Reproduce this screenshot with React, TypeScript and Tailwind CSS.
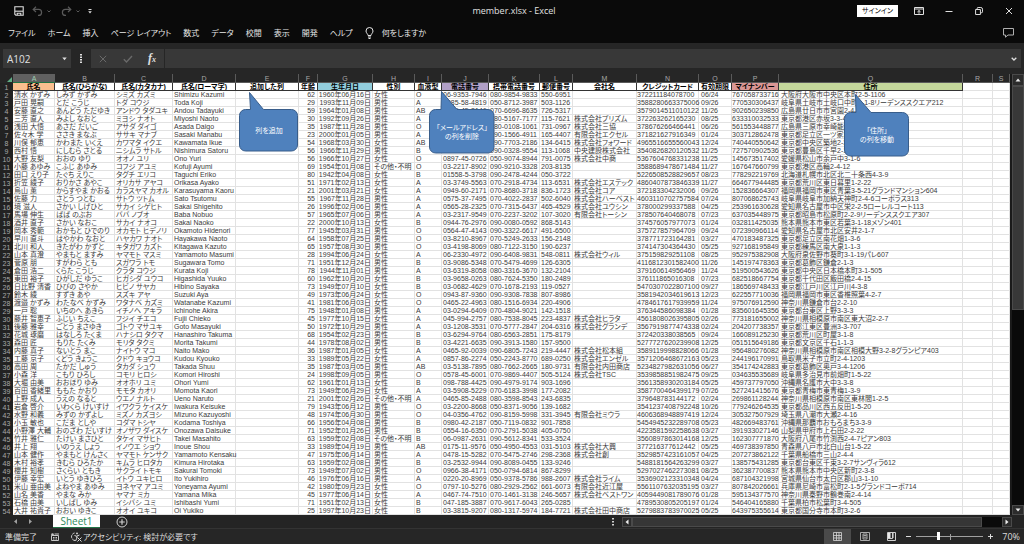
import { ReactNode } from "react";

const columns = [
  { id: "A", label: "氏名", col: "w-[42px]", head: "bg-[#fabf8f]", cell: "pl-px" },
  { id: "B", label: "氏名(ひらがな)", col: "w-[60px]", head: "bg-white", cell: "pl-px" },
  { id: "C", label: "氏名(カタカナ)", col: "w-[58px]", head: "bg-white", cell: "pl-px" },
  { id: "D", label: "氏名(ローマ字)", col: "w-[63px]", head: "bg-white", cell: "pl-px" },
  { id: "E", label: "追加した列", col: "w-[63px]", head: "bg-white", cell: "pl-px" },
  { id: "F", label: "年齢", col: "w-[19px]", head: "bg-white", cell: "pr-0.5 text-right" },
  { id: "G", label: "生年月日", col: "w-[55px]", head: "bg-[#92cddc]", cell: "pr-px text-right" },
  { id: "H", label: "性別", col: "w-[42px]", head: "bg-white", cell: "pl-px" },
  { id: "I", label: "血液型", col: "w-[27px]", head: "bg-white", cell: "pl-px" },
  { id: "J", label: "電話番号", col: "w-[47px]", head: "bg-[#b1a0c7]", cell: "pl-px" },
  { id: "K", label: "携帯電話番号", col: "w-[51px]", head: "bg-white", cell: "pl-px" },
  { id: "L", label: "郵便番号", col: "w-[33px]", head: "bg-white", cell: "pl-px" },
  { id: "M", label: "会社名", col: "w-[64px]", head: "bg-white", cell: "pl-px" },
  { id: "N", label: "クレジットカード", col: "w-[62px]", head: "bg-white", cell: "pl-0" },
  { id: "O", label: "有効期限", col: "w-[33px]", head: "bg-white", cell: "pl-0.5" },
  { id: "P", label: "マイナンバー", col: "w-[47px]", head: "bg-[#da9694]", cell: "text-right" },
  { id: "Q", label: "住所", col: "w-[184px]", head: "bg-[#c4d79b]", cell: "pl-0.5" },
  { id: "R", label: "", col: "w-[30px]", head: "bg-white", cell: "" },
  { id: "S", label: "", col: "w-auto", head: "bg-white", cell: "" },
];

// name | hiragana | katakana | romaji | age | birthday | sex | blood | tel | mobile | zip | company | card | expiry | my number | address
const members = `
清水 かずみ|しみず かずみ|シミズ カズミ|Shimizu Kazumi|62|1960年06月16日|女性|O|06-9353-7946|080-9854-9833|550-6951||372211184078700|06/24|767058733716|大阪府大阪市中央区本町2-5-1106
戸田 晃嗣|とだ こうじ|トダ コウジ|Toda Koji|29|1993年11月09日|男性|A|0585-58-4819|050-8712-3987|503-1126||3588280663375006|09/26|770530306437|岐阜県土岐市土岐口中町1-1-8リーデンススクエア212
安藤 直之|あんどう ただゆき|アンドウ タダユキ|Andou Tadayuki|59|1964年01月08日|男性|AB|0829-45-3146|070-6696-8635|726-5317||3579014511010122|11/26|902650239850|広島県廿日市市宮園2-4-17
三芳 直人|みよし なおと|ミヨシ ナオト|Miyoshi Naoto|30|1992年09月26日|男性|A|03-8210-4432|080-5167-7177|115-7621|株式会社プリズム|372263262165230|08/25|633310032533|東京都港区赤坂3-3-4
浅田 大悟|あさだ だいご|アサダ ダイゴ|Asada Daigo|35|1987年11月28日|男性|O|0848-20-1175|080-0108-1061|731-0967|株式会社三協|378676266466441|06/26|561553448877|広島県三原市幸崎能地1-2
佐々木 学|ささき まなぶ|ササキ マナブ|Sasaki Manabu|23|2000年01月05日|男性|A|03-5521-7730|090-1566-4911|165-4407|有限会社エクセル|371821627916349|01/24|303712862478|東京都足立区一ツ家2-4
川俣 郁恵|かわまた いくえ|カワマタ イクエ|Kawamata Ikue|54|1968年03月30日|女性|AB|03-1184-2096|090-7703-2186|134-6415|株式会社フォワード|4965516655560043|12/24|740440550642|東京都中央区築地2-3
西村 悟|にしむら さとる|ニシムラ サトル|Nishimura Satoru|56|1966年11月29日|男性|B|03-6604-3518|090-0328-9554|113-1068|中央建設株式会社|3540826820120532|11/25|727570902536|東京都豊島区千早2-1
大野 友梨|おおの ゆり|オオノ ユリ|Ono Yuri|56|1966年10月27日|女性|O|0897-45-0726|050-9074-8944|791-0075|株式会社中商|5367604768331238|11/25|145673517402|愛媛県松山市余戸中3-1-6
小藤 あゆみ|こふじ あゆみ|コフジ アユミ|Kofuji Ayumi|69|1954年01月08日|その他・不明|O|03-2217-8902|090-9210-3328|203-8135||3588689478671484|11/27|167647660799|東京都港区高輪2-4-12
田口 えり子|たぐち えりこ|タグチ エリコ|Taguchi Eriko|80|1942年04月08日|女性|B|01558-5-3798|090-2478-4244|050-3722||5226508528829657|08/23|778292219769|北海道札幌市北区北二十条西4-3-9
折笠 綾子|おりかさ あやこ|オリカサ アヤコ|Orikasa Ayako|51|1971年02月13日|女性|A|03-3749-5563|070-2918-4734|113-6531|株式会社エステック|4860407873846339|11/27|664677944485|東京都荒川区東日暮里1-2-22
烏山 薫|からすやま かおる|カラスヤマ カオル|Karasuyama Kaoru|21|2001年03月21日|女性|A|0949-60-2171|070-8680-3718|836-1723|株式会社コア|372183304232006|09/26|152836664307|福岡県福岡市東区青葉3-5-21グランドマンション604
佐藤 力|さとう つとむ|サトウ ツトム|Sato Tsutomu|55|1967年11月28日|男性|A|0575-37-7495|070-4022-2837|502-6040|株式会社ハーベスト|4603110702757584|07/24|807068625743|岐阜県岐阜市加納天神町2-4-6コーポラス313
境 滋人|さかい しげひと|サカイ シゲヒト|Sakai Shigehito|26|1996年02月06日|男性|A|0565-28-2325|070-7315-6437|465-4529|株式会社ユウシン|378000299337588|04/25|253961630628|愛知県名古屋市中区栄2-2-5ローレルコート113
馬場 伸生|ばば のぶお|ババ ノブオ|Baba Nobuo|57|1965年07月06日|男性|A|03-2317-9549|070-2237-3202|107-3020|有限会社トーシン|378507640468078|07/23|637035448975|東京都昭島市松原町2-2-9リーデンススクエア307
酒井 直子|さかい なおこ|サカイ ナオコ|Sakai Naoko|22|2000年10月13日|女性|B|0944-76-2976|090-0080-0592|868-5143||374576057977073|01/24|032811425035|熊本県熊本市東区若葉3-1-18メゾン401
岡本 秀範|おかもと ひでのり|オカモト ヒデノリ|Okamoto Hidenori|77|1945年03月31日|男性|O|0564-47-4143|090-3322-6617|491-6500||375727857964709|09/24|072390966114|愛知県名古屋市北区安井2-1-7
早川 直斗|はやかわ なおと|ハヤカワ ナオト|Hayakawa Naoto|64|1958年07月25日|男性|O|03-8210-8967|070-5249-2633|156-2148||378771723164281|03/27|470183487325|東京都足立区南花畑1-3-6
北川 和人|きたがわ かずと|キタガワ カズト|Kitagawa Kazuto|65|1957年08月30日|男性|O|03-4198-8069|080-7122-3150|190-6237||374147304364430|05/25|927168195849|東京都練馬区南大泉1-1-3
山本 真澄|やまもと ますみ|ヤマモト マスミ|Yamamoto Masumi|28|1994年06月24日|女性|A|06-2330-4972|090-6408-9831|548-0811|株式会社ウィル|375159829251108|08/25|952975382908|大阪府泉佐野市葵町3-1-19パレ607
菅原 朋|すがわら とも|スガワラ トモ|Sugawara Tomo|71|1951年12月24日|男性|B|03-9086-5348|070-5479-4699|126-6305||4116812301582400|11/26|145197478363|東京都葛飾区鎌倉2-1-3
倉田 浩二|くらた こうじ|クラタ コウジ|Kurata Koji|78|1944年11月01日|男性|A|03-6319-8058|080-3316-3670|132-2104||379160614956469|11/24|519500543626|東京都中央区日本橋本町3-1-505
東田 裕子|ひがしだ ゆうこ|ヒガシダ ユウコ|Higashida Yuuko|60|1962年10月20日|女性|B|03-9658-0263|080-7624-5350|180-2489||376111865016308|07/23|682518667754|東京都千代田区飯田橋2-4-15
日比野 清香|ひびの さやか|ヒビノ サヤカ|Hibino Sayaka|73|1949年07月10日|女性|B|03-0682-4629|070-1678-2193|119-0527||5470307022807100|09/27|186569748433|東京都江戸川区江戸川4-3-8
鈴木 綾|すずき あや|スズキ アヤ|Suzuki Aya|49|1973年06月24日|女性|O|0943-87-9360|090-9308-7838|807-8986||3581942034619613|12/23|622557710036|福岡県福岡市東区香椎照葉4-2-7
渡邉 かずみ|わたなべ かずみ|ワタナベ カズミ|Watanabe Kazumi|41|1981年06月03日|女性|O|0465-22-4963|080-1516-6934|220-4906||4784617617939959|11/24|975076912590|神奈川県鎌倉市台2-2-10
一戸 聡|いちのへ あきら|イチノヘ アキラ|Ichinohe Akira|75|1948年01月08日|男性|A|03-0294-6409|070-4804-9021|142-1518||376344586098384|01/28|835601645356|東京都台東区上野3-3-3
藤井 智恵子|ふじい ちえこ|フジイ チエコ|Fujii Chieko|45|1977年10月15日|女性|A|045-994-2757|080-7538-8045|223-4837|株式会社ヒラタ|4561808026395805|02/26|773181655002|神奈川県相模原市南区東大沼2-2-7
後藤 雅幸|ごとう まさゆき|ゴトウ マサユキ|Goto Masayuki|50|1972年10月29日|男性|A|03-1208-3531|070-5777-2847|204-6316|株式会社グランデ|3567919877474338|02/24|204207738357|東京都江東区豊洲3-3-707
花城 琢磨|はなしろ たくま|ハナシロ タクマ|Hanashiro Takuma|68|1954年02月23日|男性|B|03-6294-9764|080-6563-2851|175-8179||372420338038565|09/24|166089125230|東京都荒川区町屋3-1-8
森田 匠|もりた たくみ|モリタ タクミ|Morita Takumi|44|1978年08月02日|男性|B|03-4221-6635|090-3913-1580|157-9500||5277727620239908|12/25|051515649186|東京都文京区千石1-1-3
内藤 真子|ないとう まこ|ナイトウ マコ|Naito Mako|36|1987年01月05日|女性|A|0465-92-0039|090-6805-7243|219-4447|株式会社松本組|3589119998828066|01/28|956480276082|神奈川県相模原市南区相模大野3-2-8グランピア403
工藤 京子|くどう きょうこ|クドウ キョウコ|Kudou Kyouko|33|1989年05月22日|女性|A|0857-86-2274|050-2243-8770|689-0250|株式会社エンゼル|3571206468672163|05/23|244196170991|鳥取県米子市立町2-4-1203
高田 周|たかだ しゅう|タカダ シュウ|Takada Shuu|35|1987年03月05日|男性|AB|03-5138-7895|080-7662-2665|180-9731|有限会社内田商店|5234827982631056|06/27|354174242883|東京都葛飾区奥戸3-4-1206
小森 洋|こもり ひろし|コモリ ヒロシ|Komori Hiroshi|24|1998年09月05日|男性|O|0578-45-6001|070-9869-4407|505-5124|株式会社TSC|3539858851982475|09/25|034635535689|岐阜県多治見市前畑町1-5-22
大堀 由美|おおほり ゆみ|オオホリ ユミ|Ohori Yumi|62|1961年01月13日|女性|B|098-788-4425|090-4979-9174|903-1696||3561358930203184|05/25|459737797050|沖縄県名護市大中3-3-8
百田 香緒里|ももた かおり|モモタ カオリ|Momota Kaori|73|1949年06月29日|女性|A|03-5908-5229|070-6183-3998|177-2082||3587700464399179|07/26|527241415676|東京都青梅市東青梅1-3-9
上野 成人|うえの なると|ウエノ ナルト|Ueno Naruto|21|2001年02月26日|その他・不明|A|0465-85-2488|080-3598-8543|243-6835||379648783144172|02/24|269861128244|神奈川県相模原市南区東林間1-2-5
岩倉 啓介|いわくら けいすけ|イワクラ ケイスケ|Iwakura Keisuke|79|1943年06月12日|男性|O|03-2200-8668|050-8371-9056|139-1682||3541237408792248|10/26|779246264535|東京都品川区西五反田1-5-20
水野 和義|みずの かずよし|ミズノ カズヨシ|Mizuno Kazuyoshi|48|1974年06月30日|男性|O|04-0356-4762|090-8159-5998|331-3945|有限会社ミウラ|4606368948897419|12/24|305327507929|埼玉県八潮市大瀬2-4-16
小玉 敏也|こだま としや|コダマ トシヤ|Kodama Toshiya|66|1956年04月08日|男性|B|0980-42-2187|050-7119-0832|901-7858||5454945232289708|05/23|482669483761|沖縄県那覇市おもろまち3-3-9
小野澤 大輔|おのざわ だいすけ|オノザワ ダイスケ|Onozawa Daisuke|71|1952年01月26日|男性|B|0554-16-6350|070-2791-5038|405-0750||4223581592258638|03/27|391933027146|山梨県甲府市上石田2-2-22
竹井 雅仁|たけい まさひと|タケイ マサヒト|Takei Masahito|63|1959年02月08日|その他・不明|B|06-0987-2631|090-5612-8341|533-3524||3560897863014168|12/25|162307771870|大阪府八尾市竹渕西2-4-7ピアン803
井上 翔|いのうえ しょう|イノウエ ショウ|Inoue Shou|33|1989年04月19日|男性|AB|0175-11-9576|050-4950-4553|031-5103|株式会社大興|377216377612442|05/25|469738397850|青森県八戸市北白山台1-5-22
山本 健作|やまもと けんさく|ヤマモト ケンサク|Yamamoto Kensaku|47|1975年06月14日|男性|A|0478-15-5282|070-5475-2746|298-2368|株式会社創|3529857423161057|04/25|207273862122|千葉県船橋市三山2-4-4
木村 裕孝|きむら ひろたか|キムラ ヒロタカ|Kimura Hirotaka|63|1959年02月08日|男性|B|03-2532-9944|090-8089-0455|133-9246||5488181564263299|03/27|138575431285|東京都台東区千束3-2-7サンヴィラ612
櫻井 知樹|さくらい ともき|サクライ トモキ|Sakurai Tomoki|73|1949年07月02日|男性|O|0966-38-4171|050-0794-6814|867-8299||5297027462273081|08/25|362387700837|熊本県熊本市中央区新町2-3-8
伊藤 幸宏|いとう ゆきひろ|イトウ ユキヒロ|Ito Yukihiro|46|1976年06月16日|男性|A|0220-20-8969|050-9378-5786|988-2607|株式会社ライム|3536902123310348|04/24|687104321998|宮城県仙台市太白区郡山3-1-10
米山 亜由美|よねやま あゆみ|ヨネヤマ アユミ|Yoneyama Ayumi|42|1980年09月23日|女性|O|0797-10-5276|080-2929-2562|661-6073|有限会社近江屋|5561107632035195|03/27|807842026661|兵庫県尼崎市富松町2-1-5グランドコーポ714
山名 美香|やまな みか|ヤマナ ミカ|Yamana Mika|45|1977年06月14日|女性|A|0467-74-7510|070-1461-3138|246-5657|株式会社ベストワン|4059449081789076|01/28|595134377570|神奈川県秦野市鶴巻南2-4-14
石橋 由美|いしばし ゆみ|イシバシ ユミ|Ishibashi Yumi|71|1951年02月13日|女性|B|047-185-3887|070-9617-6043|265-0285||4789530805205197|01/24|546404165880|千葉県柏市松葉町3-4-505
大井 祐貴子|おおい ゆきこ|オオイ ユキコ|Oi Yukiko|25|1997年10月23日|女性|B|03-3815-9207|080-1317-5974|184-7721|株式会社田中商店|5279883783970025|05/25|643975355614|東京都国分寺市本町3-2-6
`
  .trim()
  .split("\n")
  .map((line) => {
    const v = line.split("|");
    // column E was added later and is still empty, R and S are outside the data
    return [...v.slice(0, 4), "", ...v.slice(4), "", ""];
  });

const menus = ["ファイル", "ホーム", "挿入", "ページ レイアウト", "数式", "データ", "校閲", "表示", "開発", "ヘルプ"];

const TitleBar = () => (
  <header className="flex h-[22px] items-center bg-[#0a0a0a] text-[#e0e0e0]">
    <div className="flex flex-1 items-center pl-3.5">
      <button aria-label="保存">
        <svg width="10" height="10" viewBox="0 0 10 10" fill="none" stroke="currentColor">
          <path d="M.8.8h8.4v8.4H1.8l-1-1z" strokeWidth="1.1" />
          <path d="M1 5.2h8" strokeWidth="1.1" />
          <path d="M3.2 9V7.2h3.6V9" strokeWidth="1.1" />
        </svg>
      </button>
      <button aria-label="元に戻す" className="ml-2 flex items-center gap-1 text-[#5a5a5a]">
        <svg width="11" height="10" viewBox="0 0 11 10" fill="none" stroke="currentColor" strokeWidth="1.2">
          <path d="M4 .8 1.2 3.4 4 6M1.4 3.4h5.2a3 3 0 0 1 0 6H6" />
        </svg>
        <svg width="4" height="3" viewBox="0 0 4 3" fill="none" stroke="currentColor">
          <path d="m.5.5 1.5 1.5L3.5.5" />
        </svg>
      </button>
      <button aria-label="やり直し" className="ml-2.5 flex items-center gap-1 text-[#5a5a5a]">
        <svg width="11" height="10" viewBox="0 0 11 10" fill="none" stroke="currentColor" strokeWidth="1.2">
          <path d="M7 .8l2.8 2.6L7 6M9.6 3.4H4.4a3 3 0 0 0 0 6H5" />
        </svg>
        <svg width="4" height="3" viewBox="0 0 4 3" fill="none" stroke="currentColor">
          <path d="m.5.5 1.5 1.5L3.5.5" />
        </svg>
      </button>
      <button aria-label="クイック アクセス ツール バーのユーザー設定" className="ml-2">
        <svg width="4" height="5" viewBox="0 0 4 5" fill="currentColor">
          <path d="M.5 0h3v1h-3zM.2 2.2h3.6L2 4.6z" />
        </svg>
      </button>
    </div>
    <h1 className="text-[9px] leading-[12px]">member.xlsx - Excel</h1>
    <div className="flex flex-1 items-center justify-end gap-5 pr-2.5">
      <button className="-mr-1 h-3 w-[41px] bg-white text-[7px] leading-[12px] text-black">サインイン</button>
      <button aria-label="リボンの表示オプション">
        <svg width="10" height="8" viewBox="0 0 10 8" fill="none" stroke="currentColor">
          <path d="M.5.5h9v7h-9zM.5 2h9M5 6.8V3.6M3.4 5 5 3.5 6.6 5" />
        </svg>
      </button>
      <button aria-label="最小化">
        <svg width="10" height="8" viewBox="0 0 10 8" fill="none" stroke="currentColor">
          <path d="M1.5 4.5h7" />
        </svg>
      </button>
      <button aria-label="元に戻す (縮小)">
        <svg width="10" height="8" viewBox="0 0 10 8" fill="none" stroke="currentColor">
          <path d="M1.6 2.5h4.8v5H1.6zM3.2 2.3V1.4q0-.9.9-.9h2.7q1.7 0 1.7 1.7v2.6q0 .9-.9.9h-.9" />
        </svg>
      </button>
      <button aria-label="閉じる">
        <svg width="10" height="8" viewBox="0 0 10 8" fill="none" stroke="currentColor">
          <path d="m2 1 6 6M8 1 2 7" />
        </svg>
      </button>
    </div>
  </header>
);

const Ribbon = () => (
  <nav className="flex h-[21px] items-center gap-3 bg-[#0a0a0a] px-2 text-[8px] leading-[12px] whitespace-nowrap text-[#e8e8e8]">
    {menus.map((m) => (
      <button key={m}>{m}</button>
    ))}
    <button className="flex items-center gap-2">
      <svg width="9" height="12" viewBox="0 0 9 12" fill="none" stroke="currentColor">
        <path d="M3 8.5C3 7 1 6 1 4a3.5 3.5 0 0 1 7 0c0 2-2 3-2 4.5zM3 10h3M3.5 11.5h2" />
      </svg>
      何をしますか
    </button>
    <button aria-label="コメント" className="ml-auto pr-0.5">
      <svg width="11" height="10" viewBox="0 0 11 10" fill="none" stroke="#b0b0b0">
        <path d="M.5.5h10v6.5H5L2.5 9.2V7h-2z" />
      </svg>
    </button>
  </nav>
);

const FormulaBar = () => (
  <div className="flex h-[31px] items-center bg-[#262626] px-[3px] text-[#e0e0e0]">
    <div className="flex h-[19px] w-[68px] items-center bg-[#383838] px-1">
      <input
        aria-label="名前ボックス"
        defaultValue="A102"
        className="w-full min-w-0 bg-transparent text-[10px] leading-[14px] outline-none"
      />
      <svg width="5" height="4" viewBox="0 0 5 4" fill="currentColor" className="shrink-0">
        <path d="M.3.5h4.4L2.5 3.3z" />
      </svg>
    </div>
    <svg width="20" height="9" viewBox="0 0 20 9" fill="currentColor" className="shrink-0">
      <path d="M9 0h2v1.5H9zM9 2.5h2V4H9zM9 5h2v1.5H9zM9 7.5h2V9H9z" />
    </svg>
    <div className="flex h-[19px] w-[73px] shrink-0 items-center justify-between bg-[#383838] px-2">
      <button aria-label="キャンセル">
        <svg width="8" height="8" viewBox="0 0 8 8" fill="none" stroke="#6a6a6a">
          <path d="m.8.8 6.4 6.4M7.2.8.8 7.2" />
        </svg>
      </button>
      <button aria-label="入力">
        <svg width="10" height="8" viewBox="0 0 10 8" fill="none" stroke="#6a6a6a" strokeWidth="1.4">
          <path d="m.8 4.2 2.7 2.7L9 1" />
        </svg>
      </button>
      <button className="font-['Liberation_Serif',serif] text-[12px] leading-[14px] font-bold italic">
        f<span className="text-[8px]">x</span>
      </button>
    </div>
    <div className="ml-px flex h-[19px] flex-1 items-center bg-[#383838] px-1">
      <input aria-label="数式バー" className="min-w-0 flex-1 bg-transparent text-[10px] outline-none" />
      <svg width="6" height="4" viewBox="0 0 6 4" fill="none" stroke="currentColor" strokeWidth="1.3">
        <path d="M.7.7 3 3 5.3.7" />
      </svg>
    </div>
  </div>
);

const Sheet = () => (
  <table className="w-full table-fixed border-separate border-spacing-0 bg-white text-[7px] leading-[7px] whitespace-nowrap text-[#3a3a3a]">
    <colgroup>
      <col className="w-[13px]" />
      {columns.map((c) => (
        <col key={c.id} className={c.col} />
      ))}
    </colgroup>
    <thead>
      <tr className="h-[9px] bg-[#262626] text-[#a8a8a8]">
        <th className="p-0">
          <svg width="5" height="5" viewBox="0 0 5 5" fill="#5fae86" className="mt-0.5 mr-px ml-auto">
            <path d="M5 0v5H0z" />
          </svg>
        </th>
        {columns.map((c) => (
          <th
            key={c.id}
            scope="col"
            className={
              c.id === "A"
                ? "border-b border-b-[#217346] bg-[#606060] p-0 font-normal text-[#9fd0b5]"
                : "border-r border-b border-r-[#5a5a5a] border-b-[#5a5a5a] p-0 font-normal"
            }
          >
            {c.id}
          </th>
        ))}
      </tr>
    </thead>
    <tbody>
      <tr className="h-2">
        <th scope="row" className="bg-[#222] p-0 font-normal text-[#a8a8a8]">
          1
        </th>
        {columns.map((c) => (
          <th
            key={c.id}
            className={`${c.head} ${c.label ? "border-[#333]" : "border-[#e2e2e2]"} overflow-hidden border-r border-b p-0 font-bold text-black`}
          >
            {c.label}
          </th>
        ))}
      </tr>
      {members.map((row, i) => (
        <tr key={i} className="h-2">
          <th scope="row" className="bg-[#222] p-0 font-normal text-[#a8a8a8]">
            {i + 2}
          </th>
          {columns.map((c, j) => (
            <td key={c.id} className={`border-r border-b border-[#e2e2e2] py-0 ${c.cell}`}>
              {row[j]}
            </td>
          ))}
        </tr>
      ))}
    </tbody>
  </table>
);

interface CalloutProps {
  place: string;
  d: string;
  children: ReactNode;
}

// speech bubble lying over the cells, the tail takes the top 18px
const Callout = ({ place, d, children }: CalloutProps) => (
  <div className={`absolute ${place}`}>
    <svg className="absolute inset-0 h-full w-full" fill="#4f81bd" stroke="#385d8a">
      <path d={d} />
    </svg>
    <p className="relative flex h-full items-center justify-center pt-[18px] text-center text-[7px] leading-[9px] whitespace-nowrap text-white">
      <span>{children}</span>
    </p>
  </div>
);

const VerticalScroll = () => (
  <div className="flex w-3.5 shrink-0 flex-col border-l-2 border-[#1a1a1a] bg-[#0a0a0a]">
    <button aria-label="上へ" className="flex h-3 items-center justify-center border border-[#4a4a4a] bg-[#2c2c2c]">
      <svg width="6" height="4" viewBox="0 0 6 4" fill="#eee">
        <path d="M3 .5 5.5 3.5h-5z" />
      </svg>
    </button>
    <div className="h-[224px] border border-[#4a4a4a] bg-[#383838]" />
    <button aria-label="下へ" className="mt-auto flex h-2.5 items-center justify-center border border-[#4a4a4a] bg-[#2c2c2c]">
      <svg width="6" height="4" viewBox="0 0 6 4" fill="#eee">
        <path d="M3 3.5.5.5h5z" />
      </svg>
    </button>
  </div>
);

const SheetTabs = () => (
  <div className="flex h-3.5 items-center border-b border-[#333] bg-[#242424] text-[#a0a0a0]">
    <div className="flex w-[53px] items-center gap-3 pl-3.5">
      <button aria-label="前のシート">
        <svg width="3" height="5" viewBox="0 0 3 5" fill="currentColor">
          <path d="M3 0v5L0 2.5z" />
        </svg>
      </button>
      <button aria-label="次のシート">
        <svg width="3" height="5" viewBox="0 0 3 5" fill="currentColor">
          <path d="M0 0v5l3-2.5z" />
        </svg>
      </button>
    </div>
    <button className="h-[13px] w-[47px] border-b border-[#217346] bg-white text-[10px] leading-[11px] text-[#2f8a5b]">
      Sheet1
    </button>
    <button aria-label="新しいシート" className="ml-4">
      <svg width="12" height="12" viewBox="0 0 12 12" fill="none" stroke="#d0d0d0">
        <circle cx="6" cy="6" r="5" />
        <path d="M6 3.2v5.6M3.2 6h5.6" strokeWidth="1.2" />
      </svg>
    </button>
    <div className="ml-auto flex w-[412px] items-center">
      <svg width="10" height="8" viewBox="0 0 10 8" fill="#d0d0d0">
        <path d="M0 0h2v1.5H0zM0 3h2v1.5H0zM0 6h2v1.5H0z" />
      </svg>
      <button aria-label="左へ" className="flex h-2.5 w-2.5 items-center justify-center border border-[#4a4a4a] bg-[#2c2c2c]">
        <svg width="4" height="6" viewBox="0 0 4 6" fill="#eee">
          <path d="M3.5.5v5L.5 3z" />
        </svg>
      </button>
      <div className="flex h-2.5 flex-1 bg-[#0a0a0a]">
        <div className="mr-5 flex-1 border border-[#4a4a4a] bg-[#363636]" />
      </div>
      <button aria-label="右へ" className="mr-3 flex h-2.5 w-2.5 items-center justify-center border border-[#4a4a4a] bg-[#2c2c2c]">
        <svg width="4" height="6" viewBox="0 0 4 6" fill="#eee">
          <path d="M.5.5v5L3.5 3z" />
        </svg>
      </button>
    </div>
  </div>
);

const StatusBar = () => (
  <footer className="flex h-[15px] items-center bg-[#262626] text-[8px] leading-[12px] whitespace-nowrap text-[#dcdcdc]">
    <span className="pl-[5px]">準備完了</span>
    <button aria-label="マクロの記録" className="ml-3.5">
      <svg width="8" height="8" viewBox="0 0 8 8" fill="none" stroke="#c8c8c8">
        <path d="M.5 2.5v5h7v-5zM3.5 1h4.5M2 4.5h1.5M4.5 4.5H6M2 6h1.5M4.5 6H6" />
        <circle cx="1.5" cy="1.5" r="1.3" fill="#c8c8c8" stroke="none" />
      </svg>
    </button>
    <button className="ml-3 flex items-center gap-px">
      <svg width="11" height="10" viewBox="0 0 11 10" fill="none" stroke="currentColor">
        <path d="M4 8.5A3.8 3.8 0 0 1 3.5 1" strokeDasharray="3 1" />
        <circle cx="6" cy="1.4" r=".9" fill="currentColor" stroke="none" />
        <path d="M3.5 3.5 5.5 4.2 8.5 3M5.8 4.2v2L4.5 9M6.5 5.5l4 4M10.5 5.5l-4 4" />
      </svg>
      アクセシビリティ: 検討が必要です
    </button>
    <div className="ml-auto flex h-full items-center">
      <button aria-label="標準" className="flex h-full w-[27px] items-center justify-center bg-[#4a4a4a]">
        <svg width="9" height="9" viewBox="0 0 9 9" fill="none" stroke="#d8d8d8">
          <path d="M.5.5h8v8h-8zM3.5.5v8M6 .5v8M.5 3.5h8M.5 6h8" strokeWidth=".8" />
        </svg>
      </button>
      <button aria-label="ページ レイアウト表示" className="flex h-full w-[27px] items-center justify-center">
        <svg width="10" height="9" viewBox="0 0 10 9" fill="none" stroke="#b8b8b8">
          <path d="M.5.5h9v8h-9zM3 2h4v5H3zM3.5 3.5h3M3.5 5.2h3" strokeWidth=".9" />
        </svg>
      </button>
      <button aria-label="改ページ プレビュー" className="flex h-full w-[27px] items-center justify-center">
        <svg width="9" height="9" viewBox="0 0 9 9" fill="none" stroke="#d0d0d0">
          <path d="M.5.5h8v8h-8z" />
          <path d="M1 1h2.5v5H1zM5 1h1.5v5H5z" fill="#e8e8e8" stroke="none" />
          <path d="M.5 6.5h5v-6" />
        </svg>
      </button>
      <button aria-label="縮小">
        <svg width="7" height="7" viewBox="0 0 7 7" stroke="currentColor">
          <path d="M1 3.5h5" />
        </svg>
      </button>
      <div className="relative mx-1 flex w-[67px] items-center">
        <span className="absolute left-[34px] h-1.5 w-px bg-[#a0a0a0]" />
        <input
          type="range"
          aria-label="ズーム"
          min={10}
          max={190}
          defaultValue={70}
          className="relative h-2.5 w-full appearance-none bg-transparent [&::-webkit-slider-runnable-track]:h-px [&::-webkit-slider-runnable-track]:bg-[#a0a0a0] [&::-webkit-slider-thumb]:-mt-1 [&::-webkit-slider-thumb]:h-2 [&::-webkit-slider-thumb]:w-[3px] [&::-webkit-slider-thumb]:appearance-none [&::-webkit-slider-thumb]:bg-white"
        />
      </div>
      <button aria-label="拡大">
        <svg width="7" height="7" viewBox="0 0 7 7" stroke="currentColor">
          <path d="M1 3.5h5M3.5 1v5" />
        </svg>
      </button>
      <button className="w-[30px] pr-1 text-right text-[9px]">70%</button>
    </div>
  </footer>
);

export default function App() {
  return (
    <div className="flex min-h-screen flex-col bg-[#262626] font-['Open_Sans','Noto_Sans_CJK_JP',sans-serif] [font-feature-settings:'palt']">
      <TitleBar />
      <Ribbon />
      <FormulaBar />
      <main className="flex font-['Liberation_Sans','Noto_Sans_CJK_JP',sans-serif]">
        <div className="relative min-w-0 flex-1 overflow-hidden">
          <Sheet />
          <Callout
            place="left-[239px] top-[17px] h-[61px] w-[60px]"
            d="M6.5 18.5h5L10.5 1.5l14 17h28a6 6 0 0 1 6 6v29.5a6 6 0 0 1-6 6h-46a6 6 0 0 1-6-6V24.5a6 6 0 0 1 6-6z"
          >
            列を追加
          </Callout>
          <Callout
            place="left-[429px] top-[17px] h-[63px] w-[66px]"
            d="M6.5 18.5h5.5L12.5.5l15.5 18h31a6 6 0 0 1 6 6v31.5a6 6 0 0 1-6 6h-52.5a6 6 0 0 1-6-6V24.5a6 6 0 0 1 6-6z"
          >
            「メールアドレス」
            <br />
            の列を削除
          </Callout>
          <Callout
            place="left-[844px] top-[20px] h-[63px] w-[66px]"
            d="M6.5 18.5h5.5L11.5.5l15.5 18h31.5a6 6 0 0 1 6 6v31.5a6 6 0 0 1-6 6h-52a6 6 0 0 1-6-6V24.5a6 6 0 0 1 6-6z"
          >
            「住所」
            <br />
            の列を移動
          </Callout>
        </div>
        <VerticalScroll />
      </main>
      <SheetTabs />
      <StatusBar />
    </div>
  );
}
